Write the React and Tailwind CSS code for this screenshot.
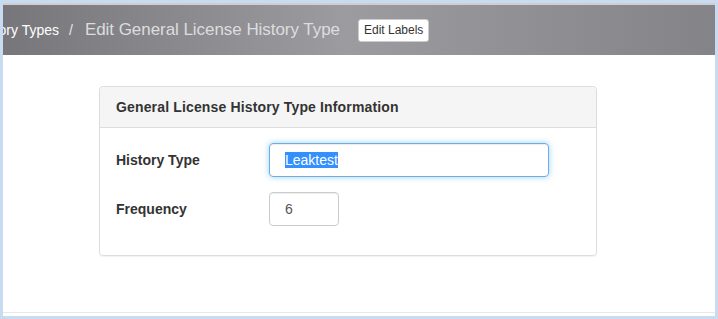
import React from "react";

const App = () => {
  return (
    <div className="w-[718px] h-[319px] bg-[#c9dbf1] pt-[3px] pl-[3px] pr-[3px] pb-[3px] font-['Liberation_Sans',Arial,sans-serif]">
      <div className="h-full bg-white flex flex-col">
        <div className="h-[2px] bg-[#cfcfcf]" />
        <div className="h-[50px] flex items-center bg-[linear-gradient(to_right,#77777b,#9b9ba0_48%,#838388)]">
          <div className="w-[56px] overflow-hidden flex justify-end">
            <span className="shrink-0 whitespace-nowrap text-[14px] text-white">
              General License History Types
            </span>
          </div>
          <span className="ml-[10px] text-[14px] text-[#e6e6e6]">/</span>
          <span className="ml-[12px] text-[17px] text-[#dddddd] whitespace-nowrap tracking-[-0.05px]">
            Edit General License History Type
          </span>
          <button className="ml-[18px] h-[23px] px-[5px] bg-white rounded-[3px] border border-[#cccccc] text-[12px] text-[#333]">
            Edit Labels
          </button>
        </div>
        <div className="flex-1 pt-[31px]">
          <div className="ml-[96px] w-[498px] border border-[#dddddd] rounded-[4px] shadow-[0_1px_1px_rgba(0,0,0,0.05)]">
            <div className="h-[41px] bg-[#f5f5f5] border-b border-[#dddddd] rounded-t-[4px] flex items-center px-[16px]">
              <h3 className="text-[14px] font-bold text-[#333] tracking-[0.15px]">
                General License History Type Information
              </h3>
            </div>
            <div className="pt-[15px] pb-[29px] px-[16px] flex flex-col gap-[15px]">
              <div className="flex items-center">
                <label className="w-[153px] text-[14px] font-bold text-[#333]">
                  History Type
                </label>
                <div className="w-[280px] h-[34px] rounded-[4px] border border-[#66afe9] shadow-[inset_0_1px_1px_rgba(0,0,0,0.075),0_0_6px_rgba(102,175,233,0.6)] flex items-center px-[15px]">
                  <span className="text-[14px] leading-[16px] bg-[#3390ff] text-white">Leaktest</span>
                </div>
              </div>
              <div className="flex items-center">
                <label className="w-[153px] text-[14px] font-bold text-[#333]">
                  Frequency
                </label>
                <div className="w-[70px] h-[34px] rounded-[4px] border border-[#cccccc] shadow-[inset_0_1px_1px_rgba(0,0,0,0.075)] flex items-center px-[15px]">
                  <span className="text-[14px] text-[#555]">6</span>
                </div>
              </div>
            </div>
          </div>
        </div>
        <div className="h-[1px] bg-[#e8e8e8] mb-[3px]" />
      </div>
    </div>
  );
};

export default App;
